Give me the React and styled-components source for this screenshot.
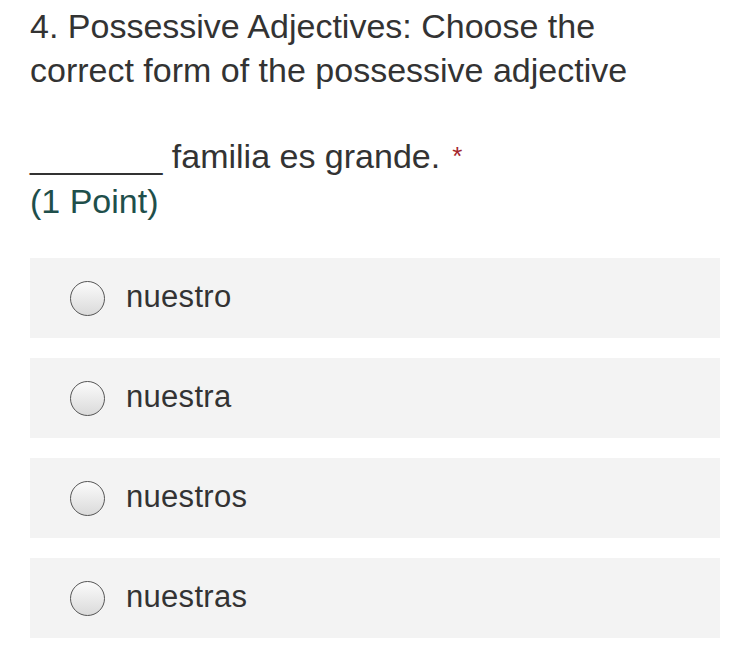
import React from 'react';
import styled, {createGlobalStyle} from 'styled-components';

const GlobalStyle = createGlobalStyle`
  body {
    margin: 0;
    background: #fff;
    font-family: "Liberation Sans", Arial, sans-serif;
  }
`

const Page = styled.div`
  padding: 4px 30px 0 30px;
  width: 690px;
`

const Title = styled.div`
  max-width: 610px;
  font-size: 34px;
  line-height: 44px;
  color: #333;
`

const Question = styled.div`
  margin-top: 42px;
  font-size: 34px;
  line-height: 44px;
  color: #333;
`

const Star = styled.span`
  color: #a4262c;
  font-size: 26px;
  vertical-align: top;
  margin-left: 12px;
`

const Points = styled.div`
  margin-top: 1px;
  font-size: 34px;
  line-height: 44px;
  color: #1f4f4b;
`

const Options = styled.div`
  margin-top: 35px;
  display: flex;
  flex-direction: column;
  gap: 20px;
`

const Option = styled.label`
  display: flex;
  align-items: center;
  height: 80px;
  background: #f3f3f3;
  padding-left: 40px;
  gap: 21px;
  font-size: 31px;
  line-height: 36px;
  letter-spacing: 0.3px;
  color: #333;
`

const Label = styled.span`
  margin-top: -2px;
`

const Radio = styled.span`
  width: 33px;
  height: 33px;
  border-radius: 50%;
  border: 1.5px solid #555;
  background: linear-gradient(#fbfbfb, #dadada);
  flex-shrink: 0;
`

const options = ['nuestro', 'nuestra', 'nuestros', 'nuestras']

const App = () => {
    return (
        <>
            <GlobalStyle/>
            <Page>
                <Title>4. Possessive Adjectives: Choose the correct form of the possessive adjective</Title>
                <Question>_______ familia es grande.<Star>*</Star></Question>
                <Points>(1 Point)</Points>
                <Options>
                    {options.map(o => (
                        <Option key={o}>
                            <Radio/>
                            <Label>{o}</Label>
                        </Option>
                    ))}
                </Options>
            </Page>
        </>
    )
}

export default App;
